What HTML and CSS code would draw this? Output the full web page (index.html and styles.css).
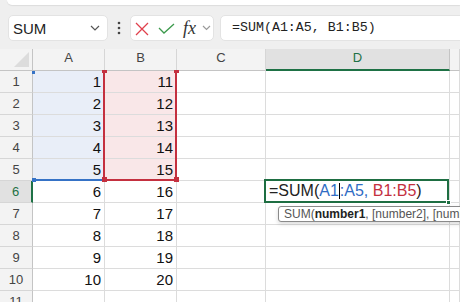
FILE: index.html
```html
<!DOCTYPE html>
<html>
<head>
<meta charset="utf-8">
<link rel="stylesheet" href="styles.css">
</head>
<body>
<div class="app">
  <div class="topstrip"><span class="cut">22</span></div>
  <div class="fbar">
    <div class="namebox">
      <span class="name">SUM</span>
      <svg class="chev" width="10" height="6" viewBox="0 0 10 6"><path d="M1 1 L5 5 L9 1" fill="none" stroke="#555" stroke-width="1.2"/></svg>
    </div>
    <div class="dots">
      <svg width="4" height="14" viewBox="0 0 4 14"><circle cx="2" cy="2" r="1.3" fill="#444"/><circle cx="2" cy="7" r="1.3" fill="#444"/><circle cx="2" cy="12" r="1.3" fill="#444"/></svg>
    </div>
    <div class="fxbox">
      <svg class="ix" width="14" height="14" viewBox="0 0 14 14"><path d="M1 1 L13 13 M13 1 L1 13" fill="none" stroke="#e0404c" stroke-width="1.3"/></svg>
      <svg class="ic" width="17" height="11" viewBox="0 0 17 11"><path d="M1 5 L6 10 L16 1" fill="none" stroke="#3c9a4c" stroke-width="1.3"/></svg>
      <span class="fx">fx</span>
      <svg class="ichev" width="9" height="6" viewBox="0 0 9 6"><path d="M1 1 L4.5 4.5 L8 1" fill="none" stroke="#9a9a9a" stroke-width="1.2"/></svg>
    </div>
    <div class="formula">=SUM(A1:A5, B1:B5)</div>
  </div>
  <div class="sheet">
    <div class="grid">
      <div class="corner"><span class="tri"></span></div>
      <div class="ch">A</div><div class="ch">B</div><div class="ch">C</div><div class="ch act">D</div><div class="ch"></div>

      <div class="rh">1</div><div class="c n fa">1</div><div class="c n fb">11</div><div class="c"></div><div class="c"></div><div class="c"></div>
      <div class="rh">2</div><div class="c n fa">2</div><div class="c n fb">12</div><div class="c"></div><div class="c"></div><div class="c"></div>
      <div class="rh">3</div><div class="c n fa">3</div><div class="c n fb">13</div><div class="c"></div><div class="c"></div><div class="c"></div>
      <div class="rh">4</div><div class="c n fa">4</div><div class="c n fb">14</div><div class="c"></div><div class="c"></div><div class="c"></div>
      <div class="rh">5</div><div class="c n fa">5</div><div class="c n fb">15</div><div class="c"></div><div class="c"></div><div class="c"></div>
      <div class="rh act">6</div><div class="c n">6</div><div class="c n">16</div><div class="c"></div><div class="c"></div><div class="c"></div>
      <div class="rh">7</div><div class="c n">7</div><div class="c n">17</div><div class="c"></div><div class="c"></div><div class="c"></div>
      <div class="rh">8</div><div class="c n">8</div><div class="c n">18</div><div class="c"></div><div class="c"></div><div class="c"></div>
      <div class="rh">9</div><div class="c n">9</div><div class="c n">19</div><div class="c"></div><div class="c"></div><div class="c"></div>
      <div class="rh">10</div><div class="c n">10</div><div class="c n">20</div><div class="c"></div><div class="c"></div><div class="c"></div>
      <div class="rh">11</div><div class="c"></div><div class="c"></div><div class="c"></div><div class="c"></div><div class="c"></div>
    </div>

    <div class="ov blue-bottom"></div>
    <div class="ov blue-sq sq-top"></div>
    <div class="ov blue-sq sq-bot"></div>
    <div class="ov red-left"></div>
    <div class="ov red-right"></div>
    <div class="ov red-bottom"></div>
    <div class="ov red-sq rs1"></div>
    <div class="ov red-sq rs2"></div>
    <div class="ov red-sq rs3"></div>
    <div class="ov red-sq rs4"></div>

    <div class="ov editcell"><span class="k">=SUM(</span><span class="ra">A1</span><span class="caret"></span><span class="ra">:A5,</span><span class="rb"> B1:B5</span><span class="k">)</span></div>
    <div class="ov handle"></div>
    <div class="ov tip"><span class="tn">SUM(</span><b>number1</b><span class="tn">, [number2], [number3], ...)</span></div>
  </div>
</div>
</body>
</html>
```

FILE: styles.css
```css
* { box-sizing: border-box; }
html, body { margin: 0; padding: 0; }
body {
  width: 460px;
  height: 302px;
  overflow: hidden;
  background: #efefef;
  font-family: "Liberation Sans", Arial, sans-serif;
}
.app { width: 460px; height: 302px; overflow: hidden; }

.topstrip {
  height: 5px;
  margin-left: 7px;
  background: #fff;
  border-bottom-left-radius: 6px;
  box-shadow: 0 1px 1px rgba(0,0,0,0.08);
  overflow: hidden;
  padding-left: 30px;
}
.cut {
  display: block;
  font-size: 15px;
  line-height: 15px;
  margin-top: -13px;
  color: #222;
  letter-spacing: 1px;
}

.fbar {
  display: flex;
  align-items: center;
  height: 26px;
  margin-top: 10px;
}
.namebox {
  margin-left: 8px;
  width: 100px;
  height: 26px;
  background: #fff;
  border: 1px solid #e3e3e3;
  border-radius: 5px;
  display: flex;
  align-items: center;
  justify-content: space-between;
  padding: 0 7px 0 4px;
}
.name { font-size: 15px; color: #222; }
.dots {
  width: 22px;
  display: flex;
  justify-content: center;
  align-items: center;
}
.dots svg { display: block; }
.fxbox {
  width: 84px;
  height: 26px;
  background: #fff;
  border: 1px solid #e3e3e3;
  border-radius: 5px;
  display: flex;
  align-items: center;
  padding-left: 4px;
}
.fxbox svg { display: block; }
.ix { margin-top: 1px; }
.ic { margin-left: 9px; margin-top: 1px; }
.fx {
  margin-left: 8px;
  font-family: "Liberation Serif", "Times New Roman", serif;
  font-style: italic;
  font-size: 18px;
  line-height: 20px;
  color: #333;
  width: 14px;
}
.ichev { margin-left: 5px; }
.formula {
  flex: 1;
  margin-left: 6px;
  margin-right: -10px;
  height: 26px;
  background: #fff;
  border: 1px solid #e3e3e3;
  border-radius: 5px;
  padding-left: 11px;
  font-family: "Liberation Mono", "Courier New", monospace;
  font-size: 13.3px;
  line-height: 24px;
  color: #222;
  white-space: nowrap;
}

.sheet {
  position: relative;
  margin-top: 8px;
}
.grid {
  display: grid;
  grid-template-columns: 33px 72px 72px 89px 184px 1fr;
  grid-auto-rows: 22px;
}
.corner {
  position: relative;
  background: #f3f3f3;
  border-right: 1px solid #c4c4c4;
  border-bottom: 1px solid #c4c4c4;
}
.tri {
  position: absolute;
  right: 3px;
  bottom: 3px;
  width: 0;
  height: 0;
  border-left: 15px solid transparent;
  border-bottom: 15px solid #dcdcdc;
}
.ch {
  background: #f3f3f3;
  border-right: 1px solid #d6d6d6;
  border-bottom: 1px solid #c4c4c4;
  text-align: center;
  font-size: 13px;
  line-height: 18px;
  color: #444;
}
.ch.act {
  background: #e1e1e1;
  color: #1e7145;
  border-right-color: #c4c4c4;
  border-bottom: 2px solid #1e7145;
}
.rh {
  background: #f3f3f3;
  border-right: 1px solid #c4c4c4;
  border-bottom: 1px solid #d6d6d6;
  text-align: center;
  font-size: 13px;
  line-height: 22px;
  color: #444;
}
.rh.act {
  background: #e1e1e1;
  color: #1e7145;
  border-right: 2px solid #1e7145;
}
.c {
  background: #fff;
  border-right: 1px solid #dcdcdc;
  border-bottom: 1px solid #dcdcdc;
  font-size: 15px;
  line-height: 21px;
  color: #111;
}
.c.n { text-align: right; padding-right: 3px; }
.c.fa { background: #e9eef8; }
.c.fb { background: #f9e7e8; }

.ov { position: absolute; }
.blue-bottom { left: 33px; top: 130px; width: 70px; height: 2px; background: #3572c6; }
.blue-sq { width: 3px; height: 3px; background: #3572c6; left: 32px; }
.sq-top { top: 22px; }
.sq-bot { top: 129px; width: 4px; height: 4px; }
.red-left { left: 103px; top: 22px; width: 2px; height: 109px; background: #c4303f; }
.red-right { left: 175px; top: 22px; width: 2px; height: 109px; background: #c4303f; }
.red-bottom { left: 103px; top: 130px; width: 74px; height: 2px; background: #c4303f; }
.red-sq { width: 5px; height: 5px; background: #c4303f; }
.rs1 { left: 102px; top: 21px; height: 3px; }
.rs2 { left: 174px; top: 21px; height: 3px; }
.rs3 { left: 102px; top: 128px; }
.rs4 { left: 174px; top: 128px; }

.editcell {
  left: 264px;
  top: 130px;
  width: 185px;
  height: 24px;
  border: 2px solid #1e6e42;
  background: #fff;
  padding-left: 3px;
  font-size: 16px;
  line-height: 19px;
  white-space: nowrap;
  color: #222;
}
.k { color: #222; }
.ra { color: #2f6cc4; }
.rb { color: #c4303f; }
.caret {
  display: inline-block;
  width: 1px;
  height: 16px;
  background: #000;
  vertical-align: -3px;
}
.handle {
  left: 446px;
  top: 151px;
  width: 5px;
  height: 5px;
  background: #1e6e42;
  border: 1px solid #fff;
}
.tip {
  left: 278px;
  top: 157px;
  width: 200px;
  height: 16px;
  background: #fff;
  border: 1px solid #8a8a8a;
  border-radius: 3px;
  box-shadow: 0 2px 4px rgba(0,0,0,0.15);
  padding-left: 5px;
  font-size: 12px;
  line-height: 14px;
  white-space: nowrap;
  overflow: hidden;
  color: #555;
}
.tip b { color: #222; }
```
